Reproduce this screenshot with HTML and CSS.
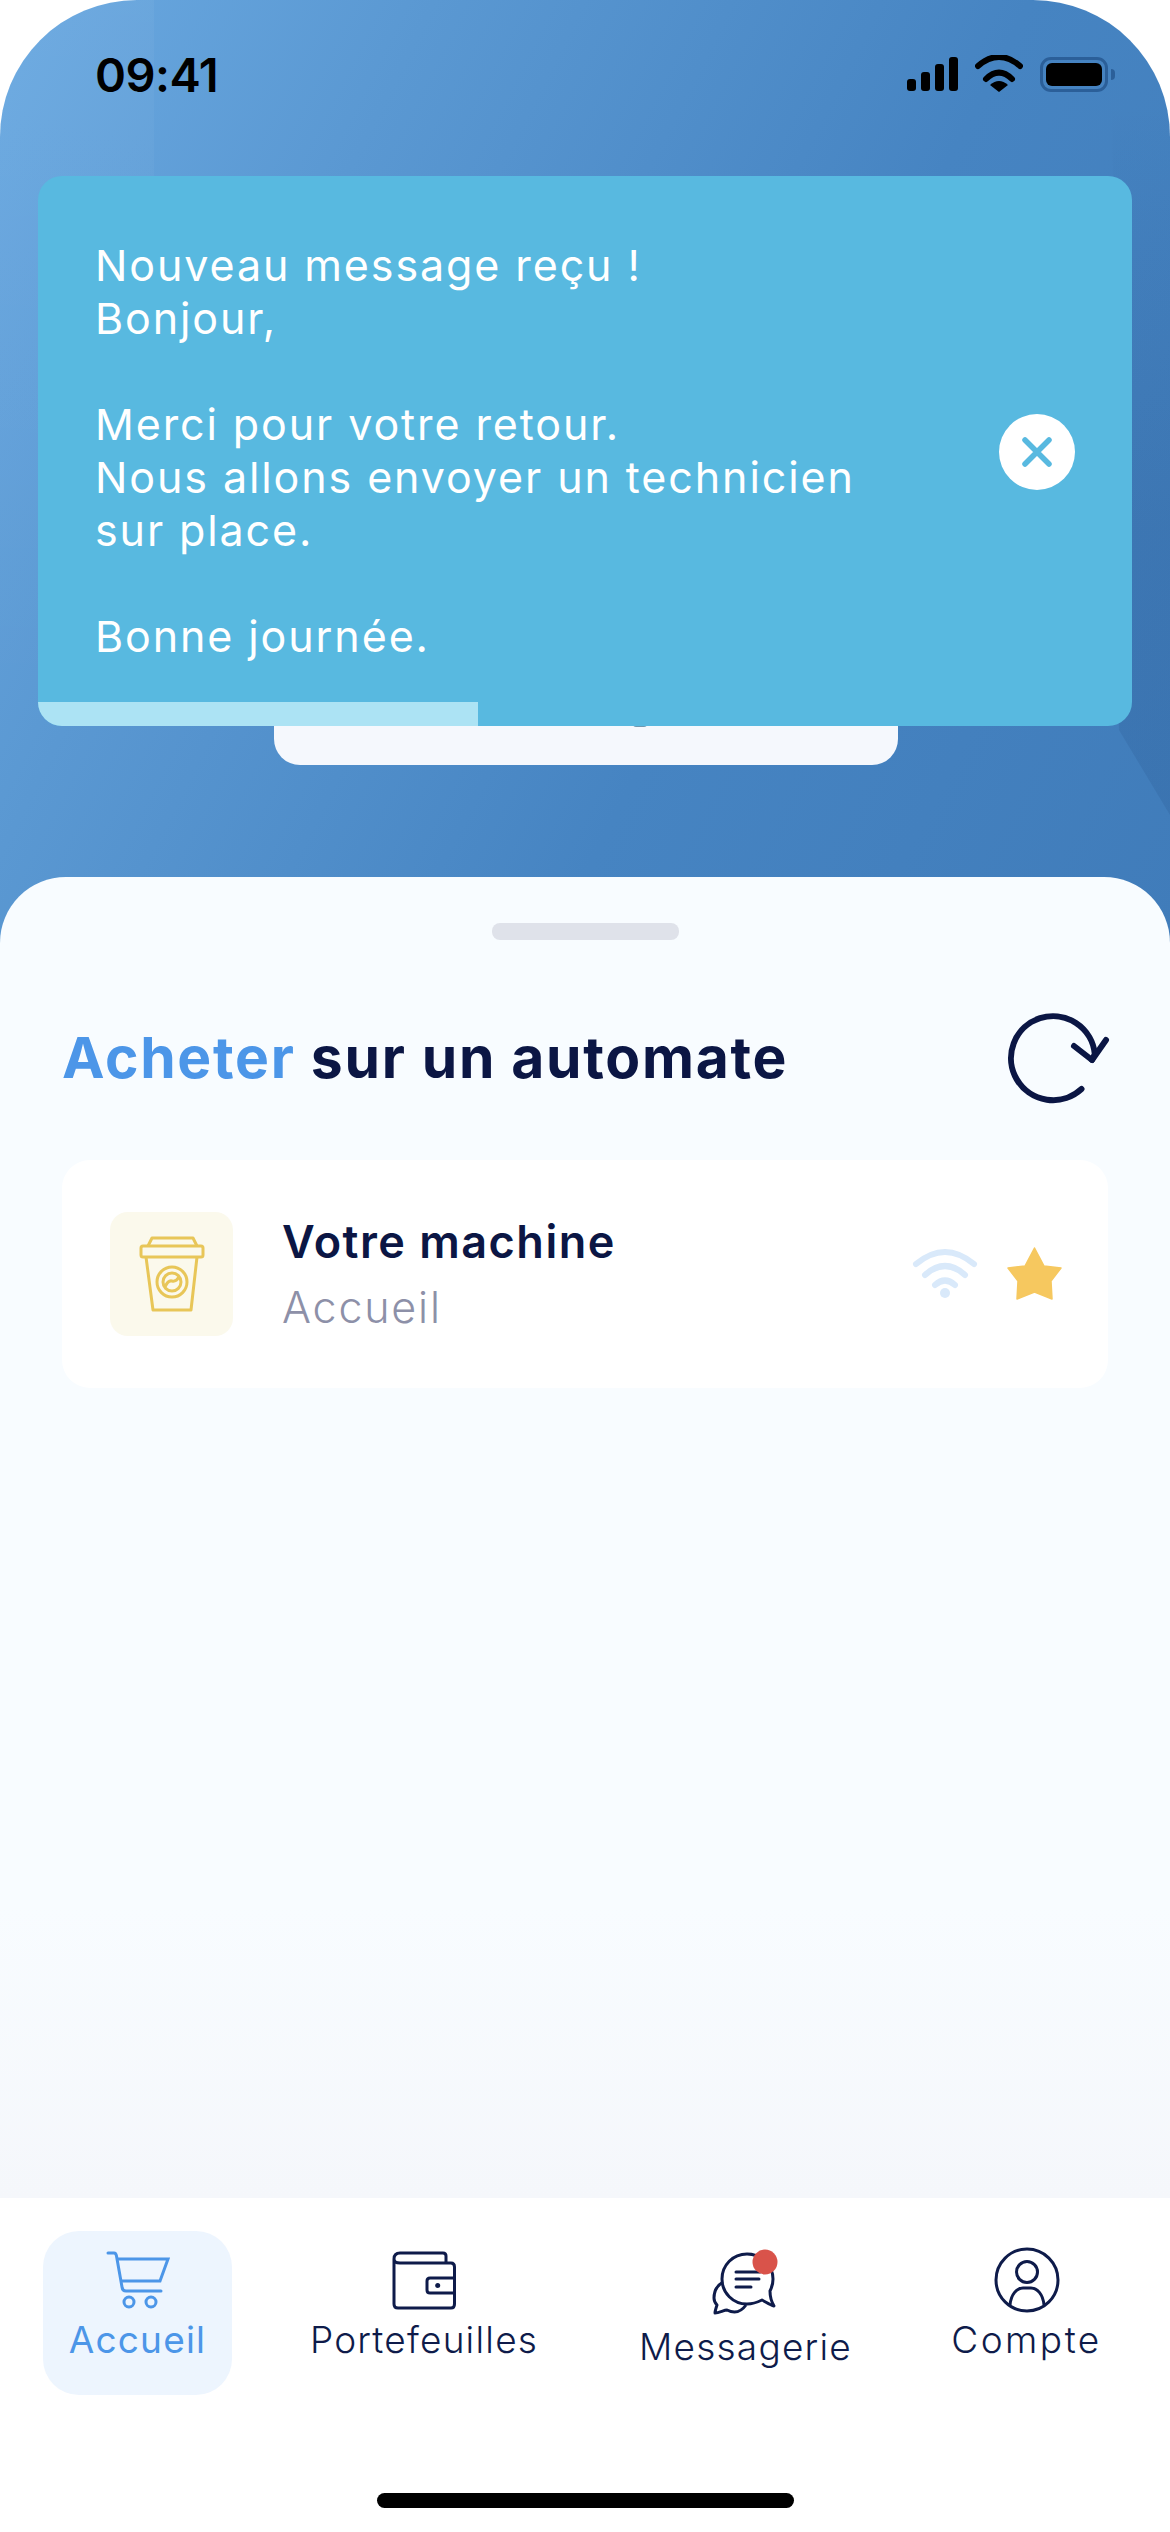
FILE: index.html
```html
<!DOCTYPE html>
<html lang="fr">
<head>
  <meta charset="UTF-8">
  <meta name="viewport" content="width=device-width, initial-scale=1.0">
  <title>Acheter sur un automate</title>
  <link rel="stylesheet" href="styles.css">
</head>
<body>
  <div class="screen">
    <main class="app">
      <header class="status-bar">
        <span class="clock">09:41</span>
        <div class="status-icons">
          <div class="signal">
            <i class="bar bar1"></i><i class="bar bar2"></i><i class="bar bar3"></i><i class="bar bar4"></i>
          </div>
          <svg class="status-wifi" width="48" height="38" viewBox="0 0 48 38">
            <path d="M3 11Q24 -7 45 11" fill="none" stroke="#000" stroke-width="6" stroke-linecap="round"/>
            <path d="M11 24Q24 11 37 24" fill="none" stroke="#000" stroke-width="6" stroke-linecap="round"/>
            <path d="M15 30Q24 22 33 30L24 37Z" fill="#000"/>
          </svg>
          <div class="battery"><i class="battery-level"></i></div>
        </div>
      </header>

      <section class="toast">
        <p class="toast-text">
          Nouveau message reçu !<br>
          Bonjour,<br>
          <br>
          Merci pour votre retour.<br>
          Nous allons envoyer un technicien<br>
          sur place.<br>
          <br>
          Bonne journée.
        </p>
        <button class="toast-close">
          <svg width="34" height="34" viewBox="0 0 34 34">
            <path d="M5 5L29 29M29 5L5 29" fill="none" stroke="#58b9e0" stroke-width="5.5" stroke-linecap="round"/>
          </svg>
        </button>
        <div class="toast-progress"></div>
      </section>
      <div class="peek-card"></div>

      <section class="sheet">
        <div class="sheet-handle"></div>
        <div class="sheet-head">
          <h2 class="sheet-title"><span class="accent">Acheter</span> sur un automate</h2>
          <svg width="112" height="104" viewBox="0 0 112 104">
            <path d="M81.5 84A42 42 0 1 1 94.8 49L92 55" fill="none" stroke="#0b1644" stroke-width="6" stroke-linecap="round" stroke-linejoin="round"/>
            <path d="M74 41L92 55L106 35" fill="none" stroke="#0b1644" stroke-width="6" stroke-linecap="round" stroke-linejoin="round"/>
          </svg>
        </div>

        <article class="machine">
          <div class="machine-thumb">
            <svg width="70" height="80" viewBox="0 0 70 80" fill="none" stroke="#e8c658" stroke-width="3" stroke-linejoin="round">
              <path d="M11 12L15 4H56L60 12"/>
              <rect x="4" y="12" width="62" height="11" rx="2"/>
              <path d="M9 23L16 76H54L60 23"/>
              <circle cx="35" cy="48" r="15"/>
              <circle cx="35" cy="48" r="9"/>
              <path d="M28 53Q31 46 35 47Q39 48 42 43"/>
            </svg>
          </div>
          <div class="machine-info">
            <h3 class="machine-name">Votre machine</h3>
            <span class="machine-place">Accueil</span>
          </div>
          <div class="machine-icons">
            <svg width="70" height="56" viewBox="0 0 70 56" fill="none" stroke="#d9e9fa" stroke-width="6" stroke-linecap="round">
              <path d="M6 18Q35 -6 64 18"/>
              <path d="M15 29Q35 11 55 29"/>
              <path d="M25 39Q35 30 45 39"/>
              <circle cx="35" cy="47" r="5" fill="#d9e9fa" stroke="none"/>
            </svg>
            <svg width="58" height="56" viewBox="0 0 58 56">
              <path d="M28.5 2L38 20L55 22L45 35L46 53L28.5 46L11 53L12 35L2 22L19 20Z" fill="#f6c85f" stroke="#f6c85f" stroke-width="1.5" stroke-linejoin="round"/>
            </svg>
          </div>
        </article>
      </section>
    </main>

    <nav class="tabbar">
      <a class="tab tab-home active">
        <svg width="66" height="68" viewBox="0 -4 66 68" fill="none" stroke="#4c96e8" stroke-width="3">
          <path d="M3 3H9Q11 3 11.5 6L17 37Q17.5 41 21 41H56" stroke-linecap="round"/>
          <path d="M12 9H63L55 31H16"/>
          <circle cx="24" cy="52" r="5"/>
          <circle cx="46" cy="52" r="5"/>
        </svg>
        <span>Accueil</span>
      </a>
      <a class="tab tab-wallet">
        <svg width="67" height="68" viewBox="0 -4 67 68" fill="none" stroke="#0e1b4a" stroke-width="3">
          <path d="M3 9Q3 3 9 3H52Q55 3 55 6V13"/>
          <path d="M3 9V54Q3 58 7 58H60Q63.5 58 63.5 54V17Q63.5 13 60 13H9Q3 13 3 9Z"/>
          <path d="M63.5 28H39Q36 28 36 31V40Q36 43 39 43H63.5"/>
          <circle cx="46.7" cy="35.5" r="2.5" fill="#0e1b4a" stroke="none"/>
        </svg>
        <span>Portefeuilles</span>
      </a>
      <a class="tab tab-messages">
        <svg width="72" height="75" viewBox="0 -2 72 75" fill="none" stroke="#0e1b4a" stroke-width="3" stroke-linejoin="round">
          <path d="M37 6C23 6 12 17 12 31C12 45 23 56 37 56C43 56 48 54 52 52C56 54 60 57 64 58C61 53 60 47 60 43C62 39 63 35 63 31C63 17 51 6 37 6Z"/>
          <path d="M13 34C6 38 4 44 4 50C4 54 6 56 7 57C6 60 5 63 5 65C9 65 14 62 17 62C25 66 31 64 36 57"/>
          <path d="M26 24H50M26 31H49M26 39H41" stroke-linecap="round"/>
          <circle cx="55" cy="14" r="12.5" fill="#d9534a" stroke="none"/>
        </svg>
        <span>Messagerie</span>
      </a>
      <a class="tab tab-account">
        <svg width="68" height="68" viewBox="0 0 68 68" fill="none" stroke="#0e1b4a" stroke-width="3">
          <circle cx="34" cy="34" r="31"/>
          <circle cx="34" cy="26" r="10.5"/>
          <path d="M17 59C18 48 24 42 30 42H38C44 42 50 48 51 59"/>
        </svg>
        <span>Compte</span>
      </a>
    </nav>
    <div class="home-indicator"></div>
  </div>
</body>
</html>
```

FILE: styles.css
```css
* {
  padding: 0;
  margin: 0;
  box-sizing: border-box;
}
html, body {
  background-color: #fff;
}
.screen {
  position: relative;
  width: 1170px;
  height: 2532px;
  overflow: hidden;
  font-family: "Inter", "Liberation Sans", sans-serif;
  color: #0b1644;
  display: flex;
  flex-direction: column;
}
.app {
  position: relative;
  height: 2198px;
  display: flex;
  flex-direction: column;
  border-radius: 137px 137px 0 0;
  overflow: hidden;
  background: linear-gradient(117deg, #6aa9e1 0%, #5a98d2 19%, #4684c2 45%, #407cba 72%);
}
/* soft shapes in the blue backdrop */
.app::before {
  content: "";
  position: absolute;
  left: 0;
  top: 0;
  width: 154px;
  height: 720px;
  background: linear-gradient(rgba(255, 255, 255, .04), rgba(255, 255, 255, 0));
}
.app::after {
  content: "";
  position: absolute;
  left: 1112px;
  top: 100px;
  width: 58px;
  height: 715px;
  background: linear-gradient(rgba(10, 40, 90, 0), rgba(10, 40, 90, .1) 60%);
  clip-path: polygon(0 0, 100% 0, 100% 100%, 12% 88.1%);
}

/* status bar */
.status-bar {
  position: relative;
  height: 176px;
  padding: 47px 62px 0 95px;
  display: flex;
  justify-content: space-between;
  align-items: flex-start;
}
.clock {
  font-size: 47px;
  line-height: 55px;
  font-weight: 600;
  letter-spacing: -.5px;
  color: #000;
}
.status-icons {
  display: flex;
  align-items: flex-start;
  padding-top: 8px;
}
.signal {
  display: flex;
  align-items: flex-end;
  gap: 5px;
  height: 34px;
  margin-top: 2px;
  margin-right: 17px;
}
.bar {
  display: block;
  width: 9px;
  background-color: #000;
  border-radius: 3px;
}
.bar1 { height: 12px; }
.bar2 { height: 19px; }
.bar3 { height: 27px; }
.bar4 { height: 34px; }
.status-wifi {
  margin-right: 17px;
}
.battery {
  position: relative;
  width: 68px;
  height: 35px;
  margin-top: 2px;
  padding: 3px;
  border: 3px solid #2b5f99;
  border-radius: 11px;
}
.battery::after {
  content: "";
  position: absolute;
  right: -10px;
  top: 9px;
  width: 4px;
  height: 11px;
  background-color: #2b5f99;
  border-radius: 0 4px 4px 0;
}
.battery-level {
  display: block;
  height: 100%;
  background-color: #000;
  border-radius: 6px;
}

/* notification */
.toast {
  position: relative;
  z-index: 2;
  height: 550px;
  margin: 0 38px;
  padding: 63px 57px 0;
  display: flex;
  justify-content: space-between;
  align-items: flex-start;
  background-color: #58b9e0;
  border-radius: 24px;
  overflow: hidden;
}
.toast-text {
  font-size: 43px;
  line-height: 53px;
  color: #fff;
  letter-spacing: 1.9px;
}
.toast-close {
  width: 76px;
  height: 76px;
  margin-top: 175px;
  border: 0;
  border-radius: 50%;
  background-color: #fff;
  display: flex;
  align-items: center;
  justify-content: center;
}
.toast-progress {
  position: absolute;
  left: 0;
  bottom: 0;
  width: 440px;
  height: 24px;
  background-color: #ace3f4;
}
.peek-card {
  position: relative;
  width: 624px;
  height: 79px;
  margin: -40px 0 0 274px;
  background-color: #f5f8fd;
  border-radius: 0 0 26px 26px;
}
.peek-card::before {
  content: "";
  position: absolute;
  left: 359px;
  top: 38px;
  width: 14px;
  height: 3px;
  background-color: #6f98b0;
  border-radius: 0 0 7px 7px;
}

/* bottom sheet */
.sheet {
  position: relative;
  z-index: 1;
  flex: 1;
  margin-top: 112px;
  padding-top: 46px;
  border-radius: 66px 66px 0 0;
  background: linear-gradient(#f8fcff 78%, #f5f7fb 100%);
}
.sheet-handle {
  width: 187px;
  height: 17px;
  margin: 0 auto 65px;
  background-color: #dfe2ea;
  border-radius: 8px;
}
.sheet-head {
  display: flex;
  align-items: center;
  justify-content: space-between;
  padding: 0 58px 0 62px;
  margin-bottom: 51px;
}
.sheet-title {
  font-size: 57px;
  font-weight: 700;
  letter-spacing: 1.7px;
}
.accent {
  color: #4c96e8;
}
.machine {
  width: 1046px;
  height: 228px;
  margin-left: 62px;
  padding: 0 44px 0 48px;
  display: flex;
  align-items: center;
  background-color: #fff;
  border-radius: 28px;
}
.machine-thumb {
  width: 123px;
  height: 124px;
  margin-right: 49px;
  display: flex;
  align-items: center;
  justify-content: center;
  background-color: #fbf9ec;
  border-radius: 18px;
}
.machine-info {
  flex: 1;
}
.machine-name {
  font-size: 45px;
  font-weight: 600;
  letter-spacing: 1.5px;
  line-height: 54px;
}
.machine-place {
  display: block;
  margin-top: 12px;
  font-size: 43px;
  font-weight: 300;
  line-height: 52px;
  color: #8d90a8;
  letter-spacing: 1.8px;
}
.machine-icons {
  display: flex;
  align-items: center;
  gap: 26px;
}

/* tab bar */
.tabbar {
  display: flex;
  align-items: flex-start;
  padding: 33px 0 0 43px;
  background-color: #fff;
}
.tab {
  height: 164px;
  padding-top: 15px;
  display: flex;
  flex-direction: column;
  align-items: center;
  font-size: 37px;
  font-weight: 350;
  line-height: 40px;
  letter-spacing: 1.2px;
  color: #0e1b4a;
}
.tab span {
  margin-top: 6px;
}
.tab-home { width: 189px; }
.tab-wallet { width: 232px; margin-left: 76px; }
.tab-messages { width: 207px; margin-left: 102px; }
.tab-account { width: 149px; margin-left: 103px; letter-spacing: 2.5px; }
.active {
  background-color: #edf5fe;
  border-radius: 36px;
  color: #4c96e8;
  font-weight: 400;
}
.home-indicator {
  position: absolute;
  left: 377px;
  top: 2493px;
  width: 417px;
  height: 15px;
  background-color: #000;
  border-radius: 8px;
}
```
